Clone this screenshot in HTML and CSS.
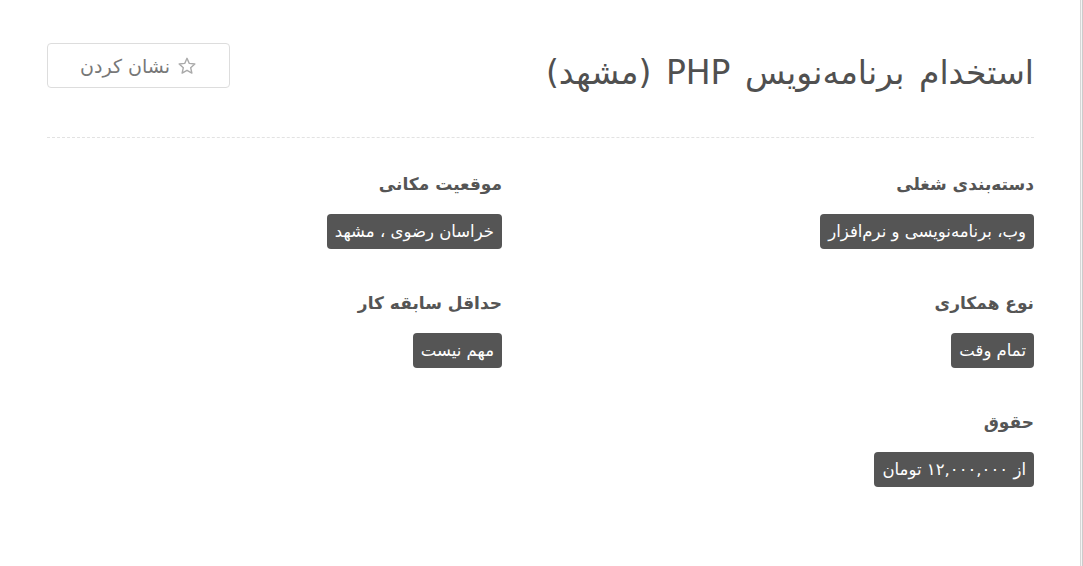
FILE: index.html
```html
<!DOCTYPE html>
<html lang="fa" dir="rtl">
<head>
<meta charset="utf-8">
<title>استخدام برنامه‌نویس PHP (مشهد)</title>
<link rel="stylesheet" href="styles.css">
</head>
<body>
<div class="page">
  <div class="side"></div>
  <main class="panel">
    <header class="head">
      <h1 class="title">استخدام برنامه‌نویس PHP (مشهد)</h1>
      <button class="mark" type="button">
        <svg class="star" viewBox="0 0 24 24" width="20" height="20" aria-hidden="true"><path d="M12 2.8l2.75 6.1 6.65.65-5 4.45 1.45 6.55L12 17.2l-5.85 3.35 1.45-6.55-5-4.45 6.65-.65z" fill="none" stroke="currentColor" stroke-width="1.7" stroke-linejoin="round"/></svg>
        <span>نشان کردن</span>
      </button>
    </header>
    <hr class="sep">
    <section class="grid">
      <div class="item">
        <h2 class="label">دسته‌بندی شغلی</h2>
        <span class="tag">وب، برنامه‌نویسی و نرم‌افزار</span>
      </div>
      <div class="item">
        <h2 class="label">موقعیت مکانی</h2>
        <span class="tag">خراسان رضوی ، مشهد</span>
      </div>
      <div class="item">
        <h2 class="label">نوع همکاری</h2>
        <span class="tag">تمام وقت</span>
      </div>
      <div class="item">
        <h2 class="label">حداقل سابقه کار</h2>
        <span class="tag">مهم نیست</span>
      </div>
      <div class="item">
        <h2 class="label">حقوق</h2>
        <span class="tag">از ۱۲,۰۰۰,۰۰۰ تومان</span>
      </div>
    </section>
  </main>
</div>
</body>
</html>
```
FILE: styles.css
```css
* { box-sizing: border-box; }
html, body { margin: 0; padding: 0; background: #fff; }
body {
  font-family: "DejaVu Sans", "Noto Sans", sans-serif;
  color: #555;
}
.page {
  display: flex;
  flex-direction: row;
  min-height: 100vh;
  padding-left: 1px;
}
.side {
  flex: 1;
  background: #f4f4f4;
  border-right: 1px solid #ccc;
}
.panel {
  width: 1080px;
  border-right: 1px solid #d6d6d6;
  background: #fff;
  padding: 0 46px;
}
.head {
  display: flex;
  justify-content: space-between;
  align-items: flex-start;
  padding-top: 43px;
  height: 137px;
}
.title {
  margin: 8px 0 0 0;
  font-size: 33px;
  font-weight: normal;
  color: #505050;
  line-height: 44px;
  word-spacing: 4px;
}
.mark {
  display: flex;
  align-items: center;
  gap: 7px;
  width: 183px;
  height: 45px;
  justify-content: center;
  background: #fff;
  border: 1px solid #ddd;
  border-radius: 4px;
  color: #777;
  font-family: inherit;
  font-size: 19px;
  padding: 0 12px;
}
.star { color: #aaa; }
.sep {
  border: 0;
  border-top: 1px dashed #e2e2e2;
  margin: 0;
  height: 0;
}
.grid {
  display: grid;
  grid-template-columns: 1fr 1fr;
  column-gap: 77px;
  padding-top: 33px;
}
.item {
  height: 119px;
}
.label {
  margin: 0;
  font-size: 17px;
  font-weight: bold;
  color: #555;
  line-height: 26px;
}
.tag {
  display: inline-block;
  margin-top: 17px;
  background: #555;
  color: #fff;
  border-radius: 4px;
  font-size: 16.5px;
  line-height: 35px;
  height: 35px;
  padding: 0 8px;
}
```
